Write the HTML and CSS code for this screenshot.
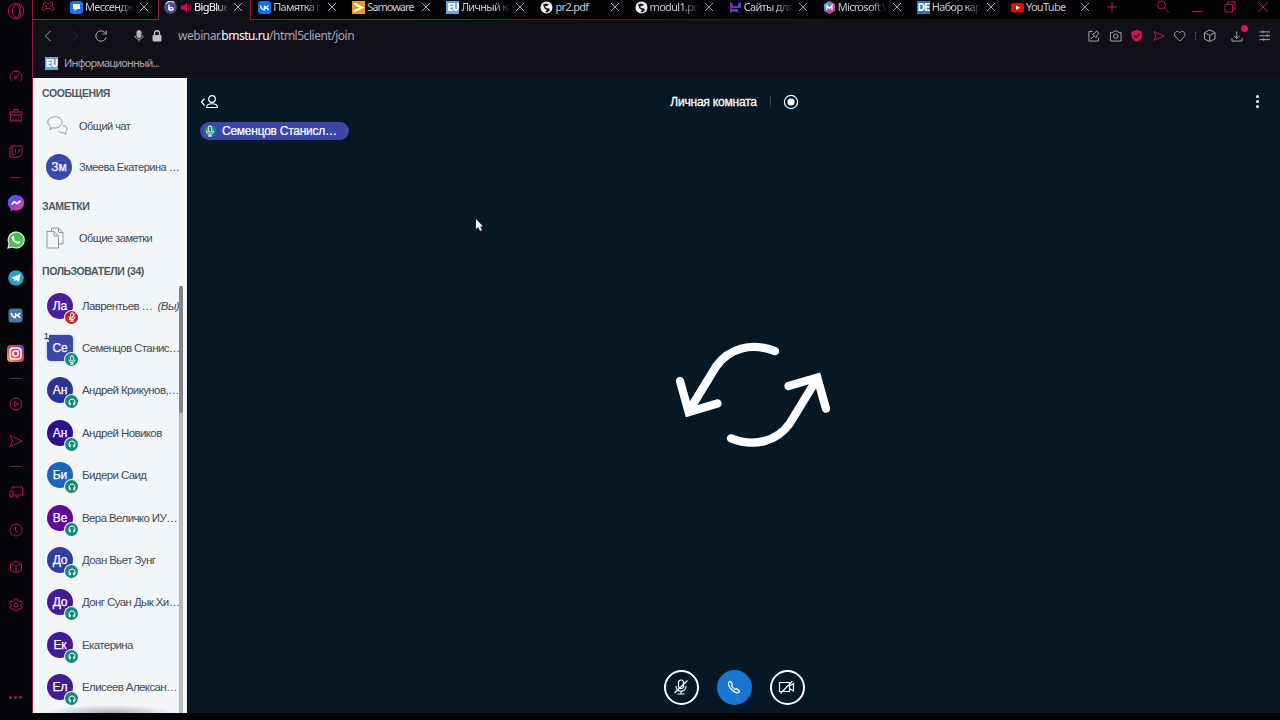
FILE: index.html
```html
<!DOCTYPE html>
<html lang="ru">
<head>
<meta charset="utf-8">
<title>BigBlueButton</title>
<link rel="stylesheet" href="styles.css">
</head>
<body>
<svg class="defs" aria-hidden="true">
  <symbol id="x" viewBox="0 0 10 10"><path d="M1 1l8 8M9 1l-8 8"/></symbol>
  <symbol id="globe" viewBox="0 0 13 13"><circle cx="6.5" cy="6.5" r="6" fill="#eee" stroke="none"/><path d="M3 3.5l3-1 3 1-2 1.5-2 .5 1 1.5 3 .5 1 1.500-2.500 2.500-2-.500 1.500-2-2.500-1.500z" fill="#16151b" stroke="none"/></symbol>
  <symbol id="mic" viewBox="0 0 12 12"><rect x="4.300" y="1" width="3.400" height="6.200" rx="1.700"/><path d="M2.500 5.500c0 5 7 5 7 0M6 9.300v1.700M4 11h4"/></symbol>
  <symbol id="muted" viewBox="0 0 12 12"><rect x="4.300" y="1" width="3.400" height="6.200" rx="1.700"/><path d="M2.500 5.500c0 5 7 5 7 0M6 9.300v1.700M3.500 11h5M1.800 10L10.200 1.500"/></symbol>
  <symbol id="head" viewBox="0 0 12 12"><path d="M2.500 8V6C2.500 1.300 9.500 1.300 9.500 6v2"/><path d="M3.600 6.500v3.300M8.400 6.500v3.300" stroke-width="1.800"/></symbol>
  <symbol id="cube" viewBox="0 0 14 14"><path d="M7 1l5.500 2.700v6.600L7 13l-5.500-2.700V3.700zM1.500 3.700L7 6.500l5.500-2.800M7 6.500V13"/></symbol>
  <symbol id="plane" viewBox="0 0 14 14"><path d="M1 1.500L13 7 1 12.500 3.500 7z"/></symbol>
</svg>
<div class="window">
  <nav class="rail">
    <div class="cell brand"><svg width="18" height="18" viewBox="0 0 18 18"><circle cx="9" cy="9" r="7.700"/><ellipse cx="9" cy="9" rx="3.500" ry="6.300"/><path d="M11 1.500c4 3 4 12 0 15"/></svg></div>
    <div class="cell"><svg width="14" height="14" viewBox="0 0 14 14"><path d="M3 11.500A6 6 0 1 1 11 11.500M6 8l4-4"/><circle cx="6.500" cy="7.500" r="1.300"/></svg></div>
    <div class="cell"><svg width="14" height="14" viewBox="0 0 14 14"><path d="M1 4h12v3H1zM2 7l-1 6h11.500L12 7M5 4V1.500h4V4M4 13v-2M7 13v-2M10 13v-2"/></svg></div>
    <div class="cell"><svg width="14" height="14" viewBox="0 0 14 14"><path d="M2 1h11v8l-3 3H7l-2 1.500V12H1V3zM3 2v7.500h2.500M6.500 4v3.500M10 4v3.500"/></svg></div>
    <div class="dash"></div>
    <div class="cell"><svg width="18" height="18" viewBox="0 0 18 18"><defs><linearGradient id="ms" x2=".8" y2="1"><stop offset="0" stop-color="#1688f5"/><stop offset=".45" stop-color="#7c37ef"/><stop offset="1" stop-color="#f5517b"/></linearGradient></defs><path d="M9 1C4 1 .8 4.500.8 8.800c0 2.600 1 4.500 2.700 5.900V17.500l2.700-1.400C12 17.700 17.200 14 17.200 8.800 17.200 4.500 14 1 9 1z" fill="url(#ms)" stroke="none"/><path d="M4.500 10.700l3-3 2.500 2 3.500-3" stroke="#fff" stroke-width="1.800"/></svg></div>
    <div class="cell"><svg width="18" height="18" viewBox="0 0 18 18"><path d="M1 17l1.100-4.300A8 8 0 1 1 5.300 16z" fill="#43c452" stroke="#e6f5e8" stroke-width="1.100"/><path d="M5 6c1-2 2-1.500 2.300 0l-.4 1.300C8 9.500 9 10.300 10.500 10.800l1-1c1.800.4 2.500 1.200 1 2.500C9 14.500 3.500 9 5 6z" fill="#fff" stroke="none"/></svg></div>
    <div class="cell"><svg width="16" height="16" viewBox="0 0 16 16"><circle cx="8" cy="8" r="7.800" fill="#2da0c9" stroke="none"/><path d="M3 8l9.500-4L11 12 8 10 6.500 11.500 6 9z" fill="#fff" stroke="none"/></svg></div>
    <div class="cell"><svg width="15" height="15" viewBox="0 0 15 15"><rect width="14" height="14" x=".5" y=".5" rx="3" fill="#4a76a8" stroke="none"/><path d="M3 5c1 3.500 2.500 4.500 4.500 4.500V5M12 5c-1 1.700-2.300 2.300-4 2.300 2 .3 3.300 1 4.300 2.500" stroke="#fff" stroke-width="1.500"/></svg></div>
    <div class="cell"><svg width="17" height="17" viewBox="0 0 17 17"><defs><linearGradient id="ig" x1="0" y1="1" x2="1" y2="0"><stop offset="0" stop-color="#fdb844"/><stop offset=".4" stop-color="#ec4a50"/><stop offset=".7" stop-color="#c32f98"/><stop offset="1" stop-color="#7337c9"/></linearGradient></defs><rect width="17" height="17" rx="4" fill="url(#ig)" stroke="none"/><rect x="3" y="3" width="11" height="11" rx="3" stroke="#fff" stroke-width="1.500"/><circle cx="8.500" cy="8.500" r="2.700" stroke="#fff" stroke-width="1.500"/><circle cx="11.800" cy="5.200" r=".8" fill="#fff" stroke="none"/></svg></div>
    <div class="dash"></div>
    <div class="cell"><svg width="14" height="14" viewBox="0 0 14 14"><circle cx="7" cy="7" r="6"/><path d="M5.300 4.500L9.500 7 5.300 9.500z"/></svg></div>
    <div class="cell"><svg width="14" height="14"><use href="#plane"/></svg></div>
    <div class="dash"></div>
    <div class="cell"><svg width="14" height="14" viewBox="0 0 14 14"><path d="M3 5V2h10.500v8H5M1 6h3v6H1zM6 12h4"/></svg></div>
    <div class="cell"><svg width="14" height="14" viewBox="0 0 14 14"><circle cx="7" cy="7" r="6"/><path d="M6.500 3.500V7l2 3"/></svg></div>
    <div class="cell"><svg width="14" height="14"><use href="#cube"/></svg></div>
    <div class="cell"><svg width="14" height="14" viewBox="0 0 14 14"><path d="M5.700 1h2.600l.5 1.800 1.300.8 1.900-.5L13.300 5.500 12 6.800v.9l1.300 1.300-1.300 2.200-1.900-.4-1.300.7L8.300 13H5.700l-.5-1.500-1.300-.7-1.900.4L.7 9 2 7.700v-.9L.7 5.500 2 3.100l1.900.5 1.300-.8z"/><circle cx="7" cy="7" r="2"/></svg></div>
    <div class="more"><i></i><i></i><i></i></div>
  </nav>
  <div class="main">
    <header class="tabs">
      <div class="pad"><svg class="pink" width="14" height="12" viewBox="0 0 14 12"><path d="M3 1.500h2l1 1h2l1-1h2L12.800 9l-1.300 1L9.500 7.500h-5L2.500 10 1.200 9zM4 4.800h2M5 3.800v2M9 4.800h1"/></svg></div>
      <div class="tab"><svg class="fav" viewBox="0 0 13 13"><rect width="13" height="13" rx="3" fill="#1d72e8"/><path d="M3 3h7v5H7l-2.500 2V8H3z" fill="#fff"/></svg><span class="t">Мессендж</span><svg class="x"><use href="#x"/></svg></div>
      <div class="tab active"><svg class="fav" viewBox="0 0 13 13"><circle cx="6.500" cy="6.500" r="6.300" fill="#4a4a93"/><path d="M1.500 3a6 6 0 0 1 9-1" fill="none" stroke="#d8d8ee" stroke-width="1.300"/><path d="M5 3.500v4.300c0 2 4 2 4 0S6 6 5.500 7.500" fill="none" stroke="#fff" stroke-width="1.400"/></svg><svg class="spk" viewBox="0 0 11 11"><path d="M0 3.500h2.500L6 1v9L2.500 7.500H0z" fill="#c40c42"/><path d="M7.500 3.500q1.500 2 0 4M9 2q2.500 3.500 0 7" fill="none" stroke="#c40c42"/></svg><span class="t">BigBlue</span><svg class="x"><use href="#x"/></svg></div>
      <div class="tab"><svg class="fav" viewBox="0 0 13 13"><rect width="13" height="13" rx="3" fill="#0b72ec"/><path d="M2.500 4.500c.5 3 2 4.300 4 4.300V4.500M10.500 4.500C9.800 6 8.500 6.500 6.800 6.500c2 .2 3 1 4 2.500" fill="none" stroke="#fff" stroke-width="1.500"/></svg><span class="t">Памятка п</span><svg class="x"><use href="#x"/></svg></div>
      <div class="tab"><svg class="fav" viewBox="0 0 13 13"><rect width="13" height="13" fill="#ec981c"/><path d="M2 2.500l8 4-8 4" fill="none" stroke="#fff" stroke-width="2"/></svg><span class="t nofade tight">Samoware</span><svg class="x"><use href="#x"/></svg></div>
      <div class="tab"><span class="fav eu">EU</span><span class="t">Личный ка</span><svg class="x"><use href="#x"/></svg></div>
      <div class="tab"><svg class="fav"><use href="#globe"/></svg><span class="t nofade">pr2.pdf</span><svg class="x"><use href="#x"/></svg></div>
      <div class="tab"><svg class="fav"><use href="#globe"/></svg><span class="t">modul1.pdf</span><svg class="x"><use href="#x"/></svg></div>
      <div class="tab"><svg class="fav" viewBox="0 0 13 13"><path d="M1 1l3 1.500v2.500h5L12 7H1zM12 12l-3-1.500V8H4L1 6.500V12l3-1.500M9 5V2.500L12 1v6z" fill="#6236bd"/></svg><span class="t">Сайты для</span><svg class="x"><use href="#x"/></svg></div>
      <div class="tab"><svg class="fav" viewBox="0 0 13 13"><defs><linearGradient id="mm" x2="1" y2="1"><stop offset=".2" stop-color="#36afd0"/><stop offset=".6" stop-color="#b947a2"/><stop offset="1" stop-color="#e83e8c"/></linearGradient></defs><path d="M6.500 0L12 3v7l-5.500 3L1 10V3z" fill="url(#mm)"/><path d="M4 9V4.500l2.500 3 2.500-3V9" fill="none" stroke="#fff" stroke-width="1.200"/></svg><span class="t">Microsoft W</span><svg class="x"><use href="#x"/></svg></div>
      <div class="tab"><span class="fav de">DE</span><span class="t">Набор кар</span><svg class="x"><use href="#x"/></svg></div>
      <div class="tab"><svg class="fav" viewBox="0 0 13 13"><rect y="2" width="13" height="9.500" rx="2.500" fill="#e90808"/><path d="M5 4.500l4 2.200-4 2.200z" fill="#fff"/></svg><span class="t nofade">YouTube</span><svg class="x"><use href="#x"/></svg></div>
      <div class="controls">
        <svg width="10" height="10" viewBox="0 0 10 10"><path d="M5 0v10M0 5h10"/></svg>
        <svg class="find" width="14" height="14" viewBox="0 0 14 14"><circle cx="5.500" cy="5" r="4"/><path d="M8.500 8l4.500 4.500"/></svg>
        <svg width="12" height="12" viewBox="0 0 12 12"><path d="M1 10.500h10.500"/></svg>
        <svg width="12" height="12" viewBox="0 0 12 12"><path d="M1 3.500h7.500V11H1zM3.500 3.500V1H11v7.500H8.500"/></svg>
        <svg width="12" height="12" viewBox="0 0 12 12"><path d="M1 1l10 10M11 1L1 11"/></svg>
      </div>
    </header>
    <div class="toolbar">
      <svg width="12" height="14" viewBox="0 0 12 14"><path d="M8.500 2L3.500 7l5 5"/></svg>
      <svg class="dim" width="12" height="14" viewBox="0 0 12 14"><path d="M3.500 2l5 5-5 5"/></svg>
      <svg class="reload" width="14" height="14" viewBox="0 0 14 14"><path d="M12 8.500A5.200 5.200 0 1 1 10.500 3.200L12 4.700M12.300 1.500v3.500H8.800"/></svg>
      <svg class="vmic" width="12" height="14" viewBox="0 0 12 14"><rect x="3.500" y="1" width="5" height="8" rx="2.500" fill="#b3adb9" stroke="none"/><path d="M2 6.500c0 5 8 5 8 0M6 10v2.500"/></svg>
      <svg width="12" height="14" viewBox="0 0 12 14"><rect x="1.500" y="6" width="9" height="6.500" rx="1" fill="#c6b9d5" stroke="none"/><path d="M3.500 6.500V4c0-3 5-3 5 0v2.500" stroke="#c6b9d5" stroke-width="1.300"/></svg>
      <span class="url">webinar.<b>bmstu.ru</b>/html5client/join</span>
      <div class="actions">
        <svg viewBox="0 0 14 14"><path d="M6 2.500H2v10h10V9M4 10.500l3-3M6 5.500l3.500 3.500 1-2.500 2-2L9.800 2 8 4.500z"/></svg>
        <svg viewBox="0 0 14 14"><path d="M1.500 3.500h3l1-1.500h3l1 1.500h3v9h-11z"/><circle cx="7" cy="7.500" r="2.300"/></svg>
        <svg viewBox="0 0 14 14"><path d="M7 .9l5.500 2V7c0 3.500-2.500 5-5.500 6.300C4 12 1.500 10.500 1.500 7V2.900z" fill="#d3124e" stroke="none"/><path d="M4.300 6.700l2.200 2.200L10 5" stroke="#111019" stroke-width="1.400"/></svg>
        <svg class="pink" viewBox="0 0 14 14"><path d="M2 2.500l10.500 4.700L2 11.800 4 7.200z"/></svg>
        <svg viewBox="0 0 14 14"><path d="M7 12.500L2.500 8C-.5 4.500 4.500 0 7 4c2.500-4 7.500.5 4.500 4z"/></svg>
        <span class="sep"></span>
        <svg viewBox="0 0 14 14"><use href="#cube"/></svg>
        <span class="dl"><svg viewBox="0 0 14 14"><path d="M7 2.500v7M4 7l3 3 3-3M2 9.500v3h10.500v-3"/></svg><i></i></span>
        <svg viewBox="0 0 14 14"><path d="M1.500 3h11M1.500 7h11M1.500 11h11M5 1.500v3M9.500 5.500v3M6 9.500v3"/></svg>
      </div>
    </div>
    <div class="bookmarks"><span class="fav eu">EU</span><span>Информационный...</span></div>
    <div class="app">
      <aside class="panel">
        <h2>СООБЩЕНИЯ</h2>
        <div class="item chat"><svg width="22" height="20" viewBox="0 0 22 20"><path d="M3 14l1-3C-2.500 6.500 2 .8 8 .8c8.500 0 9.500 9 2 11-1.500.4-3 .3-4.500 0zM16 9.500c4.500.5 5 4.800 2.500 6.300l.7 2.700-2.500-1.700c-2.500.3-4.500-.5-5-2.300"/></svg><span>Общий чат</span></div>
        <div class="item priv"><b class="av">Зм</b><span>Змеева Екатерина …</span></div>
        <h2 class="h-notes">ЗАМЕТКИ</h2>
        <div class="item notes"><svg width="18" height="22" viewBox="0 0 18 22"><path d="M5.500 4.500V1h7l4.500 4.500V17h-4.500M12.500 1v4.500H17M1 4.500h7L12.500 9v12H1zM8 4.500V9h4.500"/></svg><span>Общие заметки</span></div>
        <h2 class="h-users">ПОЛЬЗОВАТЕЛИ (34)</h2>
        <div class="users">
          <ul>
            <li><b class="av c1">Ла<i class="red"><svg><use href="#muted"/></svg></i></b><span class="me">Лаврентьев …</span><em>(Вы)</em></li>
            <li><b class="av sq c2">Се<i><svg><use href="#mic"/></svg></i><u>1,</u></b><span>Семенцов Станис…</span></li>
            <li><b class="av c3">Ан<i><svg><use href="#head"/></svg></i></b><span>Андрей Крикунов,…</span></li>
            <li><b class="av c4">Ан<i><svg><use href="#head"/></svg></i></b><span>Андрей Новиков</span></li>
            <li><b class="av c5">Би<i><svg><use href="#head"/></svg></i></b><span>Бидери Саид</span></li>
            <li><b class="av c6">Ве<i><svg><use href="#head"/></svg></i></b><span>Вера Величко ИУ…</span></li>
            <li><b class="av c7">До<i><svg><use href="#head"/></svg></i></b><span>Доан Вьет Зунг</span></li>
            <li><b class="av c8">До<i><svg><use href="#head"/></svg></i></b><span>Донг Суан Дык Хи…</span></li>
            <li><b class="av c8">Ек<i><svg><use href="#head"/></svg></i></b><span>Екатерина</span></li>
            <li><b class="av c8">Ел<i><svg><use href="#head"/></svg></i></b><span>Елисеев Алексан…</span></li>
          </ul>
          <div class="track"><div class="thumb"></div></div>
        </div>
      </aside>
      <main class="stage">
        <div class="top">
          <svg width="20" height="16" viewBox="0 0 20 16"><path d="M4.500 4.500L1.500 8l3 3.500"/><circle cx="12" cy="5" r="3.300"/><path d="M6.500 13.500c.3-5 10.700-5 11 0z"/></svg>
          <div class="room"><span>Личная комната</span><i></i><svg width="16" height="16" viewBox="0 0 16 16"><circle cx="8" cy="8" r="6.600" stroke-width="1.200"/><circle cx="8" cy="8" r="3.600" fill="#fff" stroke="none"/></svg></div>
          <div class="dots"><i></i><i></i><i></i></div>
        </div>
        <div class="talk"><i><svg><use href="#mic"/></svg></i><span>Семенцов Станисл…</span></div>
        <div class="center">
          <svg width="158" height="108" viewBox="0 0 158 108"><g id="arr" stroke-width="8.300" stroke-linecap="round"><path d="M101 10.200C78 1 55 7 42 25.500L15.500 69"/><path d="M6 40l8.700 31L43.500 62.500" stroke-linejoin="miter"/></g><use href="#arr" transform="rotate(180 79 53.800)"/></svg>
        </div>
        <div class="bar">
          <span><svg viewBox="0 0 18 18"><rect x="6.500" y="2" width="5" height="8.500" rx="2.500"/><path d="M4 8c0 7 10 7 10 0M9 13.500V16M5.500 16h7M2.500 15L15.500 2.500"/></svg></span>
          <span class="blue"><svg viewBox="0 0 18 18"><path d="M3.500 4.500l1.800-1.200 2.200 3-.9 1.500c1 1.700 2 2.800 3.600 3.700l1.500-.8 2.800 2.300-1.200 1.700c-4 .8-10.500-6-9.800-10.200z"/></svg></span>
          <span><svg viewBox="0 0 18 18"><path d="M1.500 4.500h10v9h-10zM11.500 8l4-2.500v7.500l-4-2.500M2.500 15.500L14.500 3"/></svg></span>
        </div>
        <svg class="cursor" width="9" height="14" viewBox="0 0 9 14"><path d="M1 1v10l2.300-2 1.700 4 1.800-.8L5.200 8.500H8z" fill="#fff" stroke="none"/></svg>
      </main>
    </div>
  </div>
</div>
</body>
</html>
```
FILE: styles.css
```css
* { box-sizing: border-box; }
body { margin: 0; background: #000; overflow: hidden; font-family: "Liberation Sans", Arial, sans-serif; }
svg { display: block; flex: none; fill: none; stroke: currentColor; stroke-width: 1; }
i { font-style: normal; }
.defs { position: absolute; width: 0; height: 0; }
.window { display: flex; width: 1280px; height: 720px; background: #030205; }
.pink { color: #b81649; }

.rail { width: 32px; flex: none; display: flex; flex-direction: column; color: #b81649; background: #050408; }
.cell { height: 37.6px; display: flex; align-items: center; justify-content: center; padding-right: 1px; flex: none; }
.brand { height: 58.2px; align-items: flex-start; padding-top: 2px; }
.dash { height: 13px; flex: none; display: flex; align-items: center; padding-left: 10px; }
.dash::after { content: ""; width: 11px; height: 1px; background: #8a1238; }
.more { margin: auto 2px 21px 0; display: flex; justify-content: center; gap: 2px; width: 30px; }
.more i { width: 3px; height: 3px; border-radius: 50%; background: #b01646; }

.main { flex: 1; min-width: 0; display: flex; flex-direction: column; margin-bottom: 7px; border-left: 1px solid #8f1c3e; }
.tabs { height: 20px; flex: none; display: flex; color: #ccc8d2; border-bottom: 1px solid #0d0c12; border-image: linear-gradient(90deg, #8f1c3e 0%, #8f1c3e 20%, #641730 42%, #15101a 65%) 1; }
.pad { width: 31px; display: flex; justify-content: center; padding: 1px 2px 0 0; }
.tab { width: 94.1px; flex: none; height: 19px; padding: 0 9px 5px 6px; display: flex; align-items: center; font: 11px/14px "Noto Sans", "Open Sans", sans-serif; }
.tab.active { height: 20px; width: 93px; margin-right: 1.100px; background: #111019; border: solid #8f1c3e; border-width: 0 1px; padding: 0 7px 6px 5px; color: #fff; }
.fav { width: 13px; height: 13px; flex: none; stroke: none; }
.eu, .de { font: bold 10px/13px "DejaVu Sans Condensed", sans-serif; color: #fff; background: #6da5d2; text-align: center; letter-spacing: -1px; }
.de { background: #2180a8; }
.spk { width: 11px; height: 11px; margin-left: 4px; stroke: none; }
.t { margin-left: 2px; flex: 1; min-width: 0; white-space: nowrap; letter-spacing: -.7px; -webkit-mask-image: linear-gradient(90deg, #000 68%, transparent 100%); margin-right: 5px; }
.nofade { -webkit-mask-image: none; }
.tight { letter-spacing: -1px; }
.x { width: 10px; height: 10px; color: #aaa5b0; }
.controls { flex: 1; display: flex; align-items: center; justify-content: space-between; padding: 0 11px 5px 8px; color: #b81649; }
.find { margin-left: 18px; }

.toolbar { height: 32px; flex: none; background: #111019; display: flex; align-items: center; padding-left: 9px; color: #a9a3b2; }
.dim { color: #35303d; margin-left: 15px; }
.reload { margin-left: 13px; }
.vmic { margin: 0 6px 0 25px; }
.url { margin-left: 15px; font: 12px/18px "Noto Sans", sans-serif; letter-spacing: -.48px; color: #aaa2b6; }
.url b { font-weight: 400; color: #fff; }
.actions { margin-left: auto; display: flex; align-items: center; padding-right: 9px; gap: 8px; }
.actions svg { width: 13.500px; height: 13.500px; }
.sep { width: 1px; height: 8px; border-left: 1px dotted #615b69; margin-right: -1px; }
.dl { position: relative; margin: 0 6px 0 6px; }
.dl i { position: absolute; right: -4px; top: -4px; width: 7px; height: 7px; border-radius: 50%; background: #d3124e; }
.bookmarks { height: 26px; flex: none; background: #111019; display: flex; align-items: center; gap: 6px; padding: 0 0 4px 12px; font: 11px/16px "Noto Sans", sans-serif; letter-spacing: -.8px; color: #aaa2b6; }

.app { flex: 1; min-height: 0; display: flex; }
.panel { width: 154px; flex: none; background: #f3f6f9; display: flex; flex-direction: column; padding: 8px 0 0 9px; color: #3f4b58; overflow: hidden; }
.panel h2 { margin: 0; font-size: 10.500px; line-height: 14px; height: 14px; flex: none; color: #4d5862; letter-spacing: -.4px; }
.item { display: flex; align-items: center; flex: none; height: 41px; font-size: 11px; white-space: nowrap; letter-spacing: -.5px; }
.item svg { color: #8d979f; }
.chat { padding: 0 0 0 5px; height: 52px; }
.chat span { margin-left: 10px; }
.priv { padding: 0 0 0 4px; height: 30px; }
.priv span { margin-left: 7px; }
.h-notes.h-notes { margin-top: 17px; }
.notes { padding: 0 0 0 4px; height: 49px; }
.notes span { margin-left: 15px; }
.h-users.h-users { margin-top: 2px; }
.av { position: relative; width: 26px; height: 26px; flex: none; border-radius: 50%; background: #3949ab; color: #fff; font-size: 12px; font-weight: 400; line-height: 26px; text-align: center; -webkit-text-stroke: .25px; letter-spacing: -.1px; }
.av.sq { border-radius: 4px; box-shadow: 0 0 0 1.500px #dbe1f4; }
.av i { position: absolute; left: 18px; top: 18px; width: 13px; height: 13px; border-radius: 50%; background: #17897a; box-shadow: 0 0 0 1px #e8f0f3; display: flex; align-items: center; justify-content: center; }
.av i.red { background: #c3202e; }
.av i svg { width: 10px; height: 10px; stroke-width: 1.200; }
.av u { position: absolute; left: -4px; top: -3px; width: 6px; height: 10px; background: #f3f6f9; color: #35414e; font-size: 9px; line-height: 8px; text-decoration: none; letter-spacing: -1.500px; }
.c1 { background: #4a1f9e; } .c2 { background: #3a47ab; } .c3 { background: #283593; } .c4 { background: #2c1090; }
.c5 { background: #1a66bd; } .c6 { background: #5e0a97; } .c7 { background: #303f9f; } .c8 { background: #431b99; }
.users { flex: 1; min-height: 0; display: flex; justify-content: space-between; padding-right: 4px; margin-top: 8px; position: relative; }
.users::after { content: ""; position: absolute; left: 4px; right: 12px; bottom: 0; height: 8px; background: radial-gradient(50% 100% at 50% 100%, #aaadb0, rgba(170,173,176,0)); }
ul { list-style: none; margin: -1.500px 0 0; padding: 0; width: 137px; flex: none; }
li { height: 42.400px; display: flex; align-items: center; padding-left: 5px; font-size: 11.500px; white-space: nowrap; letter-spacing: -.6px; }
li > span { margin-left: 9px; }
li em { margin-left: auto; }
.track { width: 4px; flex: none; background: #b6babd; }
.thumb { height: 127px; background: #828587; border-radius: 2px; }

.stage { flex: 1; position: relative; background: #061725; display: flex; flex-direction: column; color: #fff; }
.top { height: 44px; flex: none; display: flex; align-items: center; justify-content: space-between; padding: 3px 21px 0 13px; }
.top > svg, .bar svg { stroke-width: 1.200; }
.room { display: flex; align-items: center; font-size: 12px; -webkit-text-stroke: .3px; letter-spacing: -.2px; margin: 0 16px 0 9px; }
.room i { width: 1px; height: 11px; background: #36434f; margin: 0 12px 0 13px; }
.dots { display: grid; gap: 2px; }
.dots i { width: 3px; height: 3px; border-radius: 50%; background: #fff; }
.talk { align-self: flex-start; margin-left: 13px; width: 149px; height: 18px; border-radius: 9px; background: #3b46a8; display: flex; align-items: center; padding-left: 4px; gap: 6px; font-size: 12px; white-space: nowrap; letter-spacing: -.25px; -webkit-text-stroke: .2px; }
.talk i { width: 12px; height: 12px; border-radius: 50%; background: #17897a; }
.talk svg { width: 12px; height: 12px; }
.center { flex: 1; display: flex; justify-content: center; padding: 201px 0 0 38px; }
.bar { height: 43.500px; flex: none; display: flex; justify-content: center; gap: 18px; padding-left: 1px; }
.bar span { width: 35px; height: 35px; border: 2px solid #fff; border-radius: 50%; display: flex; align-items: center; justify-content: center; }
.bar .blue { background: #1976d2; border-color: #1976d2; }
.bar svg { width: 18px; height: 18px; }
.cursor { position: absolute; left: 288px; top: 140px; }
```
